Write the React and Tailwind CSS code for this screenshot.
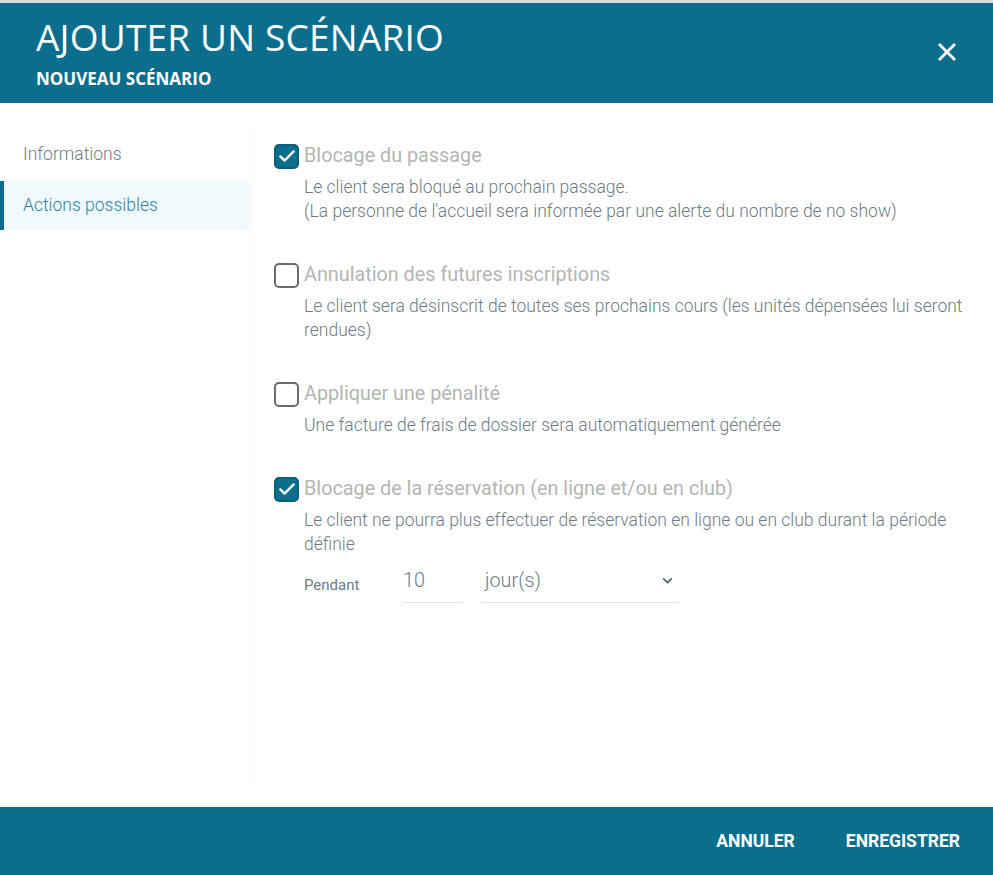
import React, { useState } from 'react';

const TEAL = 'bg-[#0a6e8c]';

const actions = [
  {
    id: 'passage',
    title: 'Blocage du passage',
    lines: [
      'Le client sera bloqué au prochain passage.',
      "(La personne de l'accueil sera informée par une alerte du nombre de no show)",
    ],
    checked: true,
  },
  {
    id: 'annulation',
    title: 'Annulation des futures inscriptions',
    lines: [
      'Le client sera désinscrit de toutes ses prochains cours (les unités dépensées lui seront rendues)',
    ],
    checked: false,
  },
  {
    id: 'penalite',
    title: 'Appliquer une pénalité',
    lines: ['Une facture de frais de dossier sera automatiquement générée'],
    checked: false,
  },
  {
    id: 'reservation',
    title: 'Blocage de la réservation (en ligne et/ou en club)',
    lines: [
      'Le client ne pourra plus effectuer de réservation en ligne ou en club durant la période définie',
    ],
    checked: true,
    duration: true,
  },
];

const Checkbox = ({ checked, onChange }) => (
  <button
    type="button"
    onClick={onChange}
    className={`w-[25px] h-[25px] shrink-0 rounded-[5px] border-2 flex items-center justify-center ${
      checked ? 'bg-[#0a6e8c] border-[#0a5f79]' : 'bg-white border-[#6b6b6b]'
    }`}
  >
    {checked && (
      <svg viewBox="0 0 24 24" className="w-5 h-5" fill="none" stroke="white" strokeWidth="2.8" strokeLinecap="round" strokeLinejoin="round">
        <path d="M4 12.5l5 5L20 6.5" />
      </svg>
    )}
  </button>
);

const App = () => {
  const [checks, setChecks] = useState(
    Object.fromEntries(actions.map(a => [a.id, a.checked]))
  );
  const [days, setDays] = useState('10');

  const toggle = (id) => setChecks({ ...checks, [id]: !checks[id] });

  return (
    <div className="w-[993px] h-[875px] flex flex-col bg-white font-['Roboto',sans-serif] overflow-hidden">
      <div className="h-[3px] bg-[#dcdcdc]" />

      {/* Header */}
      <div className={`${TEAL} h-[100px] flex items-center justify-between pl-9 pr-9 font-['Open_Sans',sans-serif] text-white`}>
        <div className="flex flex-col">
          <h1 className="text-[37px] leading-[40px] font-normal tracking-[0.2px] mt-[0px]">AJOUTER UN SCÉNARIO</h1>
          <div className="text-[17px] leading-[20px] font-bold mt-[12px] tracking-[0px]">NOUVEAU SCÉNARIO</div>
        </div>
        <button type="button" className="mt-[-2px]">
          <svg viewBox="0 0 20 20" className="w-5 h-5" fill="none" stroke="white" strokeWidth="2.8" strokeLinecap="square">
            <path d="M3 3l14 14M17 3L3 17" />
          </svg>
        </button>
      </div>

      {/* Body */}
      <div className="flex-1 flex">
        <div className="w-[251px] shrink-0 my-[22px] border-r border-[#f7f7f7]">
          <nav className="pt-[5px] pr-[1px] flex flex-col gap-[2px]">
            <div className="h-[49px] flex items-center pl-[23px] text-[17.5px] font-light text-[#6f7b86]">
              Informations
            </div>
            <div className="h-[49px] flex items-center pl-[19px] border-l-4 border-[#0a6e8c] bg-[#f0fafc] rounded-r-[4px] text-[17.5px] font-light text-[#2f84a0]">
              Actions possibles
            </div>
          </nav>
        </div>

        <div className="flex-1 pl-[23px] pr-6 pt-[40px]">
          {actions.map(action => (
            <div key={action.id} className="mb-[39px]">
              <div className="flex items-center gap-[5px] h-[26px]">
                <Checkbox checked={checks[action.id]} onChange={() => toggle(action.id)} />
                <span className="text-[19.8px] leading-[26px] text-[#b5b5b5]">{action.title}</span>
              </div>
              <div className="pl-[30px] mt-[6px] text-[17.5px] leading-[24px] font-light text-[#6f7b86]">
                {action.lines.map((line, i) => (
                  <p key={i}>{line}</p>
                ))}
              </div>
              {action.duration && (
                <div className="pl-[30px] mt-[7px] flex items-start">
                  <span className="w-[99px] text-[15px] text-[#6f7b86] mt-[11px]">Pendant</span>
                  <input
                    value={days}
                    onChange={(e) => setDays(e.target.value)}
                    className="w-[60px] h-[40px] pb-[4px] border-b border-[#e3e3e3] text-[19.8px] font-light text-[#6f7b86] outline-none"
                  />
                  <div className="ml-[18px] w-[198px] h-[40px] pb-[4px] border-b border-[#e3e3e3] flex items-center justify-between pl-[4px] pr-[5px]">
                    <span className="text-[19.8px] font-light text-[#6f7b86]">jour(s)</span>
                    <svg viewBox="0 0 12 12" className="w-[13px] h-[13px]" fill="none" stroke="#5d6770" strokeWidth="1.7" strokeLinecap="round" strokeLinejoin="round">
                      <path d="M2.5 4.5L6 8l3.5-3.5" />
                    </svg>
                  </div>
                </div>
              )}
            </div>
          ))}
        </div>
      </div>

      {/* Footer */}
      <div className={`${TEAL} h-[68px] shrink-0 flex items-center justify-end pr-[33px] gap-[51px] text-white text-[17.5px] font-bold`}>
        <button type="button">ANNULER</button>
        <button type="button">ENREGISTRER</button>
      </div>
    </div>
  );
};

export default App;
